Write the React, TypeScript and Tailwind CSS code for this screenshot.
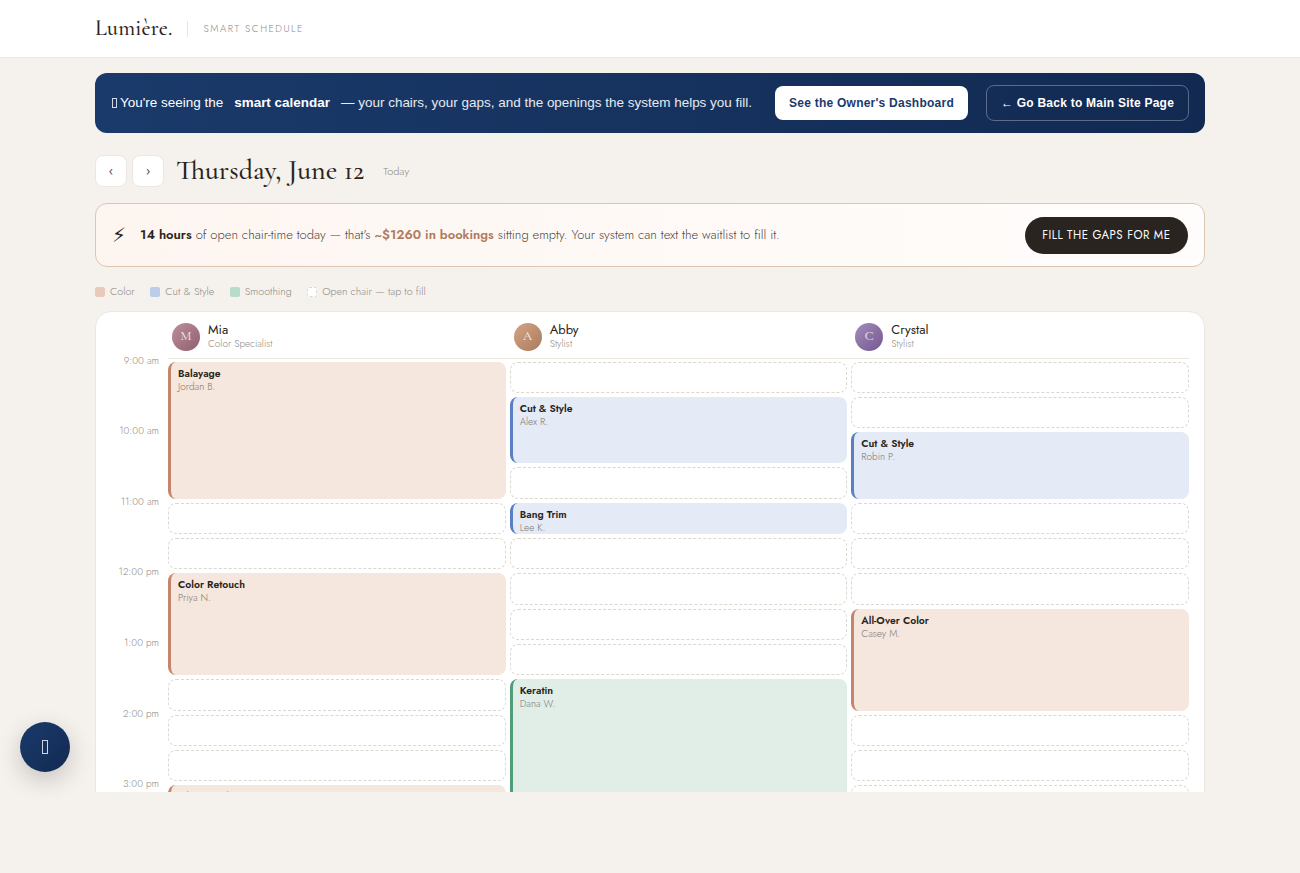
import React from 'react';

type Booking = { kind: 'color' | 'cut' | 'smooth' | 'open'; span: number; title?: string; client?: string };

const stylists: { name: string; role: string; initial: string; avatar: string; slots: Booking[] }[] = [
    {
        name: 'Mia',
        role: 'Color Specialist',
        initial: 'M',
        avatar: 'bg-gradient-to-br from-[#bd8f9c] to-[#8f5f6f]',
        slots: [
            { kind: 'color', span: 4, title: 'Balayage', client: 'Jordan B.' },
            { kind: 'open', span: 1 },
            { kind: 'open', span: 1 },
            { kind: 'color', span: 3, title: 'Color Retouch', client: 'Priya N.' },
            { kind: 'open', span: 1 },
            { kind: 'open', span: 1 },
            { kind: 'open', span: 1 },
            { kind: 'color', span: 2, title: 'Gloss Mask', client: 'Sam T.' },
        ],
    },
    {
        name: 'Abby',
        role: 'Stylist',
        initial: 'A',
        avatar: 'bg-gradient-to-br from-[#d4a585] to-[#a97a5c]',
        slots: [
            { kind: 'open', span: 1 },
            { kind: 'cut', span: 2, title: 'Cut & Style', client: 'Alex R.' },
            { kind: 'open', span: 1 },
            { kind: 'cut', span: 1, title: 'Bang Trim', client: 'Lee K.' },
            { kind: 'open', span: 1 },
            { kind: 'open', span: 1 },
            { kind: 'open', span: 1 },
            { kind: 'open', span: 1 },
            { kind: 'smooth', span: 5, title: 'Keratin', client: 'Dana W.' },
        ],
    },
    {
        name: 'Crystal',
        role: 'Stylist',
        initial: 'C',
        avatar: 'bg-gradient-to-br from-[#a58bbd] to-[#74588f]',
        slots: [
            { kind: 'open', span: 1 },
            { kind: 'open', span: 1 },
            { kind: 'cut', span: 2, title: 'Cut & Style', client: 'Robin P.' },
            { kind: 'open', span: 1 },
            { kind: 'open', span: 1 },
            { kind: 'open', span: 1 },
            { kind: 'color', span: 3, title: 'All-Over Color', client: 'Casey M.' },
            { kind: 'open', span: 1 },
            { kind: 'open', span: 1 },
            { kind: 'open', span: 1 },
        ],
    },
];

const hours = ['9:00 am', '10:00 am', '11:00 am', '12:00 pm', '1:00 pm', '2:00 pm', '3:00 pm'];

const kindClass = {
    color: 'bg-[#f5e6de] border-l-[3px] border-[#c4866a] pl-[7px]',
    cut: 'bg-[#e4eaf6] border-l-[3px] border-[#5b80c2] pl-[7px]',
    smooth: 'bg-[#e0eee7] border-l-[3px] border-[#4f9e78] pl-[7px]',
    open: 'bg-white border border-dashed border-[#ddd8cf]',
};

const sans = "font-['Jost','Lato',sans-serif]";

const Slot: React.FC<{ slot: Booking; col: number; row: number }> = ({ slot, col, row }) => (
    <div
        className={`rounded-lg overflow-hidden pr-2 py-[4px] ${kindClass[slot.kind]}`}
        style={{ gridColumn: col + 2, gridRow: `${row + 2} / span ${slot.span}` }}
    >
        {slot.title && (
            <>
                <div className="text-[10.4px] leading-[15px] font-semibold text-[#2a2420]">{slot.title}</div>
                <div className="text-[10px] leading-[12px] font-light text-[#7d7871]">{slot.client}</div>
            </>
        )}
    </div>
);

const App: React.FC = () => {
    return (
        <div className={`h-[873px] overflow-hidden bg-[#f5f2ee] text-[#2a2420] ${sans}`}>
            <header className="h-[58px] bg-white border-b border-[#ebe7e1] flex items-center pl-[95px]">
                <span className="font-['Cormorant_Garamond','Liberation_Serif',serif] text-[22px] font-medium tracking-[0.2px] text-[#2a2420]">Lumière.</span>
                <span className="w-px h-4 bg-[#e8e4de] ml-[14px] mr-[16px]" />
                <span className="text-[10px] font-light tracking-[1.5px] text-[#8f8a83]">SMART SCHEDULE</span>
            </header>

            <main className="w-[1110px] mx-auto pt-[15px] h-[734px] overflow-hidden">
                <div className="h-[60px] rounded-xl bg-gradient-to-r from-[#1a3a6b] to-[#122a52] flex items-center justify-between pl-4 pr-4 font-['Liberation_Sans',Arial,sans-serif] text-white">
                    <p className="text-[13.48px] flex items-center whitespace-nowrap">
                        <i className="w-[5px] h-[10px] border border-white/80 ml-px mr-[3px]" />
                        <span>You're seeing the</span>
                        <strong className="font-bold mx-[11px]">smart calendar</strong>
                        <span className="text-white/90">— your chairs, your gaps, and the openings the system helps you fill.</span>
                    </p>
                    <div className="flex items-center gap-[18px]">
                        <button className="h-[34px] w-[193px] rounded-lg bg-white text-[#1a3a6b] text-[12px] font-bold tracking-[0.24px] whitespace-nowrap">See the Owner's Dashboard</button>
                        <button className="h-[36px] w-[203px] rounded-lg border border-white/30 text-white text-[12px] font-bold tracking-[0.24px] whitespace-nowrap">← Go Back to Main Site Page</button>
                    </div>
                </div>

                <div className="flex items-center mt-[22px] h-8">
                    <button className="w-8 h-8 rounded-lg bg-white border border-[#ebe7e1] text-[13px] text-[#4a453f]">‹</button>
                    <button className="w-8 h-8 rounded-lg bg-white border border-[#ebe7e1] text-[13px] text-[#4a453f] ml-[5px]">›</button>
                    <h1 className="font-['Cormorant_Garamond','Liberation_Serif',serif] text-[28px] font-medium ml-[12px] -mt-0.5 text-[#2a2420] leading-none">Thursday, June 12</h1>
                    <span className="text-[11px] font-light text-[#8f8a83] ml-[19px]">Today</span>
                </div>

                <div className="mt-4 h-[64px] rounded-xl border border-[#dbc5b3] bg-gradient-to-r from-[#fdf5f0] to-[#fffdfc] flex items-center justify-between pl-4 pr-[16.5px]">
                    <p className="flex items-center text-[13px] font-light text-[#4a453f] whitespace-nowrap">
                        <span className="font-['DejaVu_Sans',sans-serif] text-[20px] text-[#2a2420] w-[28px]">{'\u26A1\uFE0E'}</span>
                        <strong className="font-semibold text-[#2a2420]">14 hours</strong>
                        <span className="ml-1">of open chair-time today — that's</span>
                        <strong className="font-semibold text-[#b07a5e] mx-1">~$1260 in bookings</strong>
                        <span>sitting empty. Your system can text the waitlist to fill it.</span>
                    </p>
                    <button className="h-[37px] px-[17px] pt-px rounded-full bg-[#2a2420] text-white text-[11.5px] tracking-[0.5px] whitespace-nowrap">FILL THE GAPS FOR ME</button>
                </div>

                <div className="flex items-center gap-[15.5px] mt-[18px] text-[10.7px] font-light text-[#8f8a83] h-[13px]">
                    <span className="flex items-center gap-[5px]"><i className="w-2.5 h-2.5 rounded-[2px] bg-[#e8c9ba]" /><span className="mt-px">Color</span></span>
                    <span className="flex items-center gap-[5px]"><i className="w-2.5 h-2.5 rounded-[2px] bg-[#bccde9]" /><span className="mt-px">Cut & Style</span></span>
                    <span className="flex items-center gap-[5px]"><i className="w-2.5 h-2.5 rounded-[2px] bg-[#b8dcc9]" /><span className="mt-px">Smoothing</span></span>
                    <span className="flex items-center gap-[5px]"><i className="w-2.5 h-2.5 rounded-[2px] bg-white border border-dashed border-[#ddd9d2]" /><span className="mt-px">Open chair — tap to fill</span></span>
                </div>

                <div className="mt-[13px] rounded-t-2xl bg-white border border-[#ebe7e1] pl-3.5 pr-[15px] pt-[11px] pb-10">
                    <div className="grid grid-cols-[54px_repeat(3,minmax(0,1fr))] grid-rows-[34.5px] gap-x-1 gap-y-1 auto-rows-[31.33px]">
                        <div className="h-[36px] border-b border-[#ebe7e1] col-start-2 col-end-5 row-start-1" />
                        {stylists.map((s, i) => (
                            <div
                                key={s.name}
                                className="h-[36px] flex items-start gap-2 pl-1"
                                style={{ gridColumn: i + 2, gridRow: 1 }}
                            >
                                <div className={`w-7 h-7 rounded-full flex items-center justify-center text-white/90 text-[13px] font-['Cormorant_Garamond','Liberation_Serif',serif] ${s.avatar}`}>{s.initial}</div>
                                <div>
                                    <div className="text-[13px] leading-[14px] text-[#2a2420]">{s.name}</div>
                                    <div className="text-[10px] leading-[12px] font-light text-[#8f8a83] mt-[1px]">{s.role}</div>
                                </div>
                            </div>
                        ))}
                        {hours.map((h, i) => (
                            <div
                                key={h}
                                className="text-right text-[10px] font-light text-[#8f8a83] pr-[5px] leading-[14px] -mt-[8px]"
                                style={{ gridColumn: 1, gridRow: `${i * 2 + 2} / span 2` }}
                            >
                                {h}
                            </div>
                        ))}
                        {stylists.map((s, col) => {
                            let row = 0;
                            return s.slots.map((slot, k) => {
                                const el = <Slot key={`${s.name}-${k}`} slot={slot} col={col} row={row} />;
                                row += slot.span;
                                return el;
                            });
                        })}
                    </div>
                </div>
            </main>

            <button className="fixed left-5 bottom-[101px] w-[50px] h-[50px] rounded-full bg-gradient-to-br from-[#1a3a6b] to-[#122a52] shadow-[0_8px_24px_rgba(0,0,0,0.2)] flex items-center justify-center">
                <i className="w-[6px] h-[14px] border border-white/80" />
            </button>
        </div>
    );
};

export default App;
